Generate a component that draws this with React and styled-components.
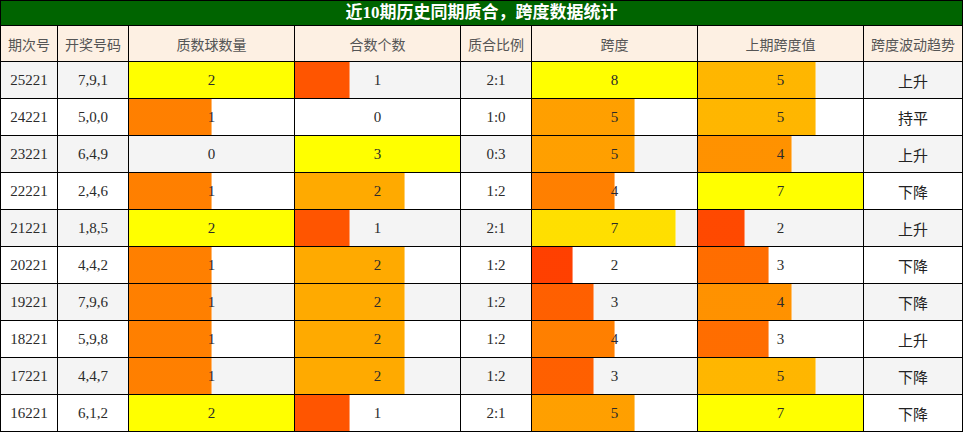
import React from 'react'
import styled, { createGlobalStyle } from 'styled-components'

const Global = createGlobalStyle`
body{
    margin: 0;
    background: #fff;
    font-family: "Liberation Serif", "Noto Sans CJK SC", serif;
}
`

const Board = styled.div`
width: 963px;
box-sizing: border-box;
border: 1px solid #000;
`

const Title = styled.div`
height: 24px;
line-height: 24px;
background-color: #006400;
color: #fff;
font-size: 17px;
font-weight: bold;
text-align: center;
border-bottom: 1px solid #000;
`

const Row = styled.div`
display: grid;
grid-template-columns: 56px 71px 166px 166px 71px 166px 166px 99px;
height: ${(p) => (p.$head ? '35px' : '36px')};
background-color: ${(p) => (p.$head ? '#fdf0e3' : p.$odd ? '#f4f4f4' : '#fff')};
&:not(:last-child){
    border-bottom: 1px solid #000;
}
`

const Cell = styled.div`
box-sizing: border-box;
display: flex;
align-items: center;
justify-content: center;
font-size: 15px;
color: #2b2b2b;
&:not(:first-child){
    border-left: 1px solid #000;
}
`

const HeadCell = styled(Cell)`
font-size: 14px;
color: #555;
font-family: "Noto Sans CJK SC", sans-serif;
`

const TrendCell = styled(Cell)`
font-family: "Noto Sans CJK SC", sans-serif;
color: #222;
`

const heads = ['期次号', '开奖号码', '质数球数量', '合数个数', '质合比例', '跨度', '上期跨度值', '跨度波动趋势']

const rows = [
    ['25221', '7,9,1', 2, 1, '2:1', 8, 5, '上升'],
    ['24221', '5,0,0', 1, 0, '1:0', 5, 5, '持平'],
    ['23221', '6,4,9', 0, 3, '0:3', 5, 4, '上升'],
    ['22221', '2,4,6', 1, 2, '1:2', 4, 7, '下降'],
    ['21221', '1,8,5', 2, 1, '2:1', 7, 2, '上升'],
    ['20221', '4,4,2', 1, 2, '1:2', 2, 3, '下降'],
    ['19221', '7,9,6', 1, 2, '1:2', 3, 4, '下降'],
    ['18221', '5,9,8', 1, 2, '1:2', 4, 3, '上升'],
    ['17221', '4,4,7', 1, 2, '1:2', 3, 5, '下降'],
    ['16221', '6,1,2', 2, 1, '2:1', 5, 7, '下降'],
]

const maxOf = (i) => Math.max(...rows.map((r) => r[i]))

// excel style data bar, red -> yellow by share of the column max
const barStyle = (v, max) => {
    if (!v) return undefined
    const f = v / max
    const hue = 60 * f
    const c = `hsl(${hue},100%,50%)`
    if (f >= 1) return { backgroundColor: c }
    const pct = (f * 100).toFixed(2)
    const edge = `hsl(${hue},100%,72%)`
    return {
        backgroundImage: `linear-gradient(to right, ${c} 0, ${c} calc(${pct}% - 1px), ${edge} calc(${pct}% - 1px), ${edge} ${pct}%, transparent ${pct}%)`,
    }
}

const BarCell = ({ v, max }) => <Cell style={barStyle(v, max)}>{v}</Cell>

const App = () => {
    const maxes = { 2: maxOf(2), 3: maxOf(3), 5: maxOf(5), 6: maxOf(6) }
    return (
        <>
            <Global />
            <Board>
                <Title>近10期历史同期质合，跨度数据统计</Title>
                <Row $head>
                    {heads.map((h) => (
                        <HeadCell key={h}>{h}</HeadCell>
                    ))}
                </Row>
                {rows.map((r, i) => (
                    <Row key={r[0]} $odd={i % 2 === 0}>
                        <Cell>{r[0]}</Cell>
                        <Cell>{r[1]}</Cell>
                        <BarCell v={r[2]} max={maxes[2]} />
                        <BarCell v={r[3]} max={maxes[3]} />
                        <Cell>{r[4]}</Cell>
                        <BarCell v={r[5]} max={maxes[5]} />
                        <BarCell v={r[6]} max={maxes[6]} />
                        <TrendCell>{r[7]}</TrendCell>
                    </Row>
                ))}
            </Board>
        </>
    )
}

export default App
